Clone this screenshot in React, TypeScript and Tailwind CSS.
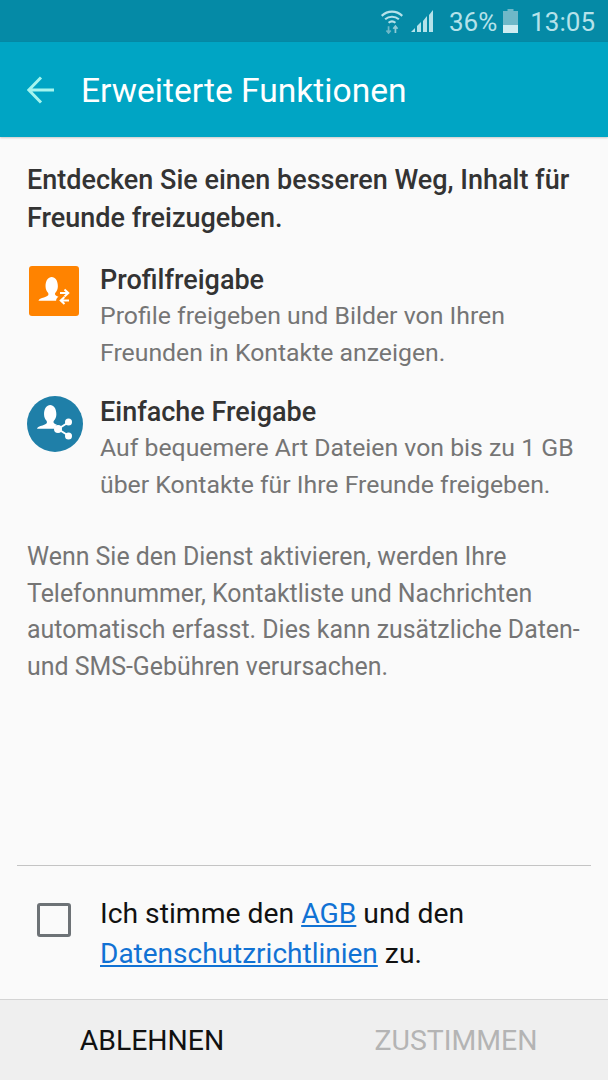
// head and shoulders, drawn in a 30x27 box
const Person = () => (
  <path
    fill="#fff"
    d="M0 27c.5-1.500 2-2.300 4-3 3-1 6-1.800 7-3.200.5-1 .4-1.800-.2-2.800C9.200 16 8 14 8 10.500 8 4 11 0 15 0s7 4 7 10.500c0 3.500-1.200 5.500-2.800 7.500-.8 1-.6 2.200.5 3 1 .6 2 1 3 1.500-1.700 1-2.700 2.700-2.700 4.500z"
  />
);

const ProfileIcon = () => (
  <div className="w-[50px] h-[50px] rounded-[3px] bg-[#ff8300]">
    <svg width="50" height="50" viewBox="0 0 50 50">
      <g transform="translate(9.500 11) scale(0.880)">
        <Person />
      </g>
      <path d="M31 27h8M35.500 23.500l3.800 3.500-3.800 3.500" fill="none" stroke="#fff" strokeWidth="2" />
      <path d="M40 34.500h-8M35.500 31l-3.800 3.500 3.800 3.500" fill="none" stroke="#fff" strokeWidth="2" />
    </svg>
  </div>
);

const ShareIcon = () => (
  <div className="w-[56px] h-[56px] rounded-full bg-[#1f7fa8]">
    <svg width="56" height="56" viewBox="0 0 56 56">
      <g transform="translate(10 9) scale(0.880)">
        <Person />
      </g>
      <path d="M31 33l11-7M31 33l11 7" stroke="#fff" strokeWidth="2" />
      <circle cx="31" cy="33" r="4" fill="#fff" />
      <circle cx="41.500" cy="26" r="3.500" fill="#fff" />
      <circle cx="41.500" cy="40" r="3.500" fill="#fff" />
    </svg>
  </div>
);

const features = [
  {
    title: "Profilfreigabe",
    lines: ["Profile freigeben und Bilder von Ihren", "Freunden in Kontakte anzeigen."],
    icon: <ProfileIcon />,
    iconClass: "pt-[4px] pl-[2px]",
  },
  {
    title: "Einfache Freigabe",
    lines: ["Auf bequemere Art Dateien von bis zu 1 GB", "über Kontakte für Ihre Freunde freigeben."],
    icon: <ShareIcon />,
    iconClass: "pt-[2px]",
  },
];

const App = () => {
  return (
    <div className="w-[608px] h-[1080px] flex flex-col bg-[#fafafa] overflow-hidden font-['Roboto',sans-serif]">
      <div className="h-[42px] bg-[#058aa6] flex items-center justify-end pr-[13px] text-[#b5e2ea] text-[26px]">
        <svg width="24" height="26" viewBox="0 0 28 30" className="mr-[6px]">
          <path d="M2 9c7-6.500 17-6.500 24 0M6 13c4.500-4 11.500-4 16 0M10 17c2.500-2 5.500-2 8 0" fill="none" stroke="#b5e2ea" strokeWidth="2.500" />
          <path d="M10 21v8M7.500 26l2.500 3 2.500-3" fill="none" stroke="#6fb8c8" strokeWidth="2" />
          <path d="M18 29v-8M15.500 24l2.500-3 2.500 3" fill="none" stroke="#8fcad6" strokeWidth="2" />
        </svg>
        <svg width="24" height="24" viewBox="0 0 24 24" className="mr-[15px]" fill="#b5e2ea">
          <path d="M1 23h4v-4z" />
          <path d="M7 23h4v-10l-4 4z" />
          <path d="M13 23h4V7l-4 5z" />
          <path d="M19 23h4V1l-4 5z" />
        </svg>
        <span className="leading-none pt-[1px]">36%</span>
        <svg width="15" height="24" viewBox="0 0 15 24" className="ml-[6px] mr-[12px]">
          <path d="M4.500 0h6v2H15v22H0V2h4.500z" fill="#6fb8c8" />
          <path d="M0 16h15v8H0z" fill="#cfecf1" />
        </svg>
        <span className="leading-none pt-[1px]">13:05</span>
      </div>

      <div className="h-[95px] bg-[#00a5c4] flex items-center pl-[27px] shadow-[0_1px_2px_rgba(0,0,0,0.2)] z-10">
        <svg width="28" height="28" viewBox="0 0 28 28" className="mr-[26px]">
          <path d="M27 14H2M14 1.500L1.800 14 14 26.500" fill="none" stroke="#a5f5ee" strokeWidth="3" />
        </svg>
        <span className="text-[33.600px] text-white pt-[3px]">Erweiterte Funktionen</span>
      </div>

      <div className="flex-1 px-[27px] pt-[24px]">
        <p className="text-[27px] leading-[38px] font-medium text-[#333333]">
          Entdecken Sie einen besseren Weg, Inhalt für
          <br />
          Freunde freizugeben.
        </p>

        <div className="flex flex-col gap-[23px] mt-[25px]">
          {features.map((f) => (
            <div key={f.title} className="flex">
              <div className={`w-[73px] shrink-0 ${f.iconClass}`}>{f.icon}</div>
              <div>
                <p className="text-[27px] leading-[36px] font-medium text-[#333333]">{f.title}</p>
                {f.lines.map((l) => (
                  <p key={l} className="text-[24.800px] leading-[36.500px] text-[#757575]">
                    {l}
                  </p>
                ))}
              </div>
            </div>
          ))}
        </div>

        <p className="text-[24.900px] leading-[36.600px] text-[#757575] mt-[36px]">
          Wenn Sie den Dienst aktivieren, werden Ihre
          <br />
          Telefonnummer, Kontaktliste und Nachrichten
          <br />
          automatisch erfasst. Dies kann zusätzliche Daten-
          <br />
          und SMS-Gebühren verursachen.
        </p>
      </div>

      <div className="mx-[17px] border-t border-[#c4c4c4]" />
      <div className="h-[133px] flex items-start pl-[37px] pt-[28px]">
        <div className="w-[34px] h-[34px] mt-[9px] border-[3px] border-[#6d7276] rounded-[3px] mr-[29px]" />
        <p className="text-[28.300px] leading-[40px] text-[#111111]">
          Ich stimme den <span className="text-[#1172d4] underline">AGB</span> und den
          <br />
          <span className="text-[28px] text-[#1172d4] underline">Datenschutzrichtlinien</span> zu.
        </p>
      </div>

      <div className="h-[81px] bg-[#efefef] border-t border-[#d4d4d4] flex items-center text-[28.400px] pt-[3px]">
        <span className="w-[304px] text-center text-[#111111]">ABLEHNEN</span>
        <span className="w-[304px] text-center text-[#b4b4b4]">ZUSTIMMEN</span>
      </div>
    </div>
  );
};

export default App;
